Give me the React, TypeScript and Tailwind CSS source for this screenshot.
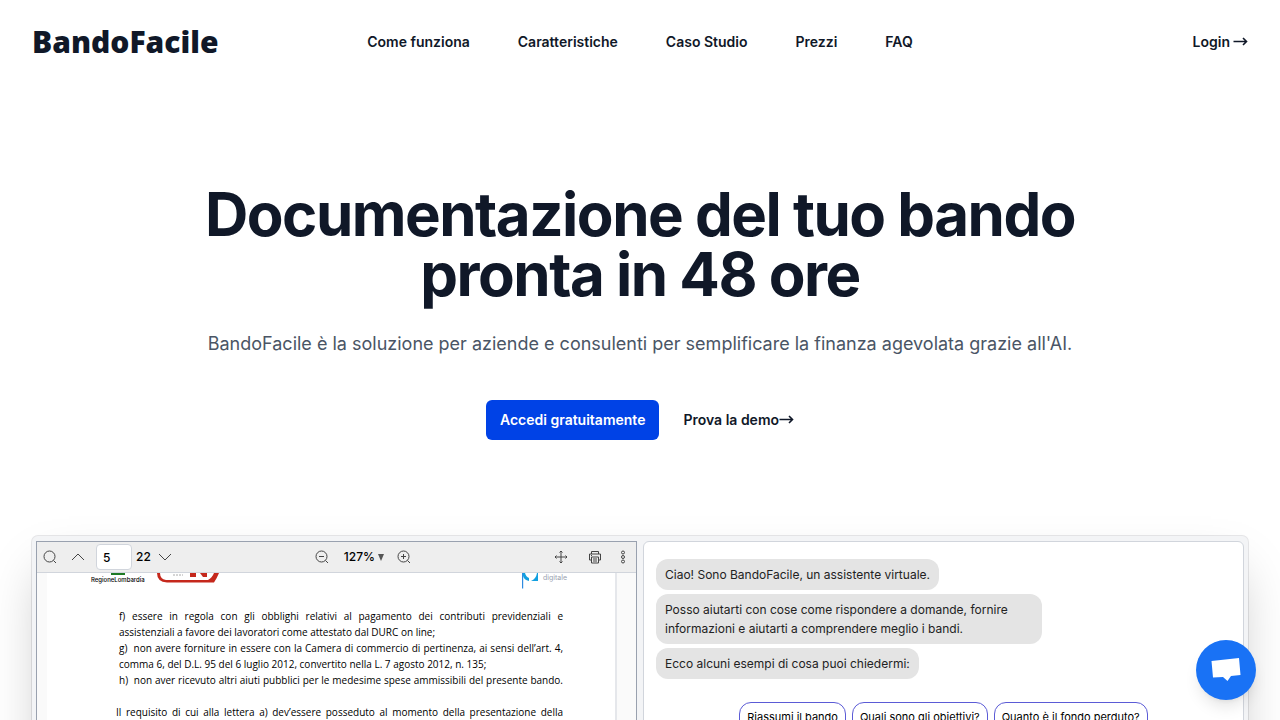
import type { ReactNode } from 'react';

const navigation = [
  { name: 'Come funziona', href: '#come-funziona' },
  { name: 'Caratteristiche', href: '#caratteristiche' },
  { name: 'Caso Studio', href: '#caso-studio' },
  { name: 'Prezzi', href: '#prezzi' },
  { name: 'FAQ', href: '#faq' },
];

const requirements = [
  { text: 'f) essere in regola con gli obblighi relativi al pagamento dei contributi previdenziali e', fill: true },
  { text: 'assistenziali a favore dei lavoratori come attestato dal DURC on line;', fill: false },
  { text: 'g)\u00a0 non avere forniture in essere con la Camera di commercio di pertinenza, ai sensi dell’art. 4,', fill: true },
  { text: 'comma 6, del D.L. 95 del 6 luglio 2012, convertito nella L. 7 agosto 2012, n. 135;', fill: false },
  { text: 'h)\u00a0 non aver ricevuto altri aiuti pubblici per le medesime spese ammissibili del presente bando.', fill: true },
];

const messages = [
  'Ciao! Sono BandoFacile, un assistente virtuale.',
  'Posso aiutarti con cose come rispondere a domande, fornire informazioni e aiutarti a comprendere meglio i bandi.',
  'Ecco alcuni esempi di cosa puoi chiedermi:',
];

const suggestions = [
  'Riassumi il bando',
  'Quali sono gli obiettivi?',
  'Quanto è il fondo perduto?',
];

function ToolIcon({ children }: { children: ReactNode }) {
  return (
    <svg
      viewBox="0 0 16 16"
      className="h-4 w-4"
      fill="none"
      stroke="#444"
      strokeWidth="1"
      aria-hidden="true"
    >
      {children}
    </svg>
  );
}

function Arrow() {
  return (
    <svg
      viewBox="0 0 15 10"
      className="h-2.5 w-[15px]"
      fill="none"
      stroke="currentColor"
      strokeWidth="1.6"
      aria-hidden="true"
    >
      <path d="M.5 4.500h13M10 1l3.500 3.500L10 8" />
    </svg>
  );
}

function Header() {
  return (
    <header>
      <nav className="flex items-center justify-between p-6 lg:px-8">
        <div className="flex lg:flex-1">
          <a
            href="#"
            className="font-['Open_Sans','Noto_Sans',sans-serif] text-3xl font-extrabold"
          >
            BandoFacile
          </a>
        </div>
        <div className="hidden gap-x-12 md:flex">
          {navigation.map((item) => (
            <a key={item.name} href={item.href} className="text-sm leading-6 font-semibold">
              {item.name}
            </a>
          ))}
        </div>
        <div className="flex lg:flex-1 lg:justify-end">
          <a href="#login" className="flex items-center gap-[3px] text-sm leading-6 font-semibold">
            Login
            <Arrow />
          </a>
        </div>
      </nav>
    </header>
  );
}

function Hero() {
  return (
    <div className="mx-auto max-w-4xl text-center">
      <h1 className="text-6xl leading-none font-bold tracking-tight">
        Documentazione del tuo bando pronta in 48 ore
      </h1>
      <p className="mt-6 text-lg leading-8 text-gray-600">
        BandoFacile è la soluzione per aziende e consulenti per semplificare la
        finanza agevolata grazie all'AI.
      </p>
      <div className="mt-10 flex items-center justify-center gap-x-6">
        <button className="rounded-md bg-[#0042e6] px-3.5 py-2.5 text-sm font-semibold text-white">
          Accedi gratuitamente
        </button>
        <a href="#demo" className="flex items-center text-sm leading-6 font-semibold">
          Prova la demo
          <Arrow />
        </a>
      </div>
    </div>
  );
}

function Toolbar() {
  return (
    <div className="flex h-[31px] items-center justify-between border-b border-gray-300 bg-[#eeeeee] px-[5px] text-xs font-medium text-black">
      <div className="flex items-center">
        <button aria-label="Cerca">
          <ToolIcon>
            <circle cx="7.5" cy="7.5" r="5.5" />
            <path d="M11.5 11.5 14 14" />
          </ToolIcon>
        </button>
        <button aria-label="Pagina precedente" className="ml-3">
          <ToolIcon>
            <path d="m2 11 6-6 6 6" />
          </ToolIcon>
        </button>
        <input
          aria-label="Pagina"
          defaultValue="5"
          className="ml-2.5 h-[26px] w-9 rounded-sm border border-gray-300 bg-white px-1.5"
        />
        <span className="ml-1">22</span>
        <button aria-label="Pagina successiva" className="ml-1.5">
          <ToolIcon>
            <path d="m2 5 6 6 6-6" />
          </ToolIcon>
        </button>
      </div>
      <div className="flex items-center">
        <button aria-label="Riduci">
          <ToolIcon>
            <circle cx="7.5" cy="7.5" r="5.5" />
            <path d="M11.5 11.5 14 14M5 7.5h5" />
          </ToolIcon>
        </button>
        <button className="ml-3.5 flex items-center gap-[3px]">
          127%
          <svg viewBox="0 0 6 7" className="h-[7px] w-1.5" aria-hidden="true">
            <path d="M0 0h6L3 7Z" fill="#555" />
          </svg>
        </button>
        <button aria-label="Ingrandisci" className="ml-3">
          <ToolIcon>
            <circle cx="7.5" cy="7.5" r="5.5" />
            <path d="M11.5 11.5 14 14M5 7.5h5M7.5 5v5" />
          </ToolIcon>
        </button>
      </div>
      <div className="flex items-center">
        <button aria-label="Sposta">
          <ToolIcon>
            <path d="M8 2v12M2 8h12M6.5 3.5 8 2l1.5 1.5M6.5 12.5 8 14l1.5-1.5M3.5 6.5 2 8l1.5 1.5M12.5 6.5 14 8l-1.5 1.5" />
          </ToolIcon>
        </button>
        <button aria-label="Stampa" className="ml-[18px]">
          <ToolIcon>
            <path d="M4.5 5V2.5h7V5M4.5 11h-2V5h11v6h-2M4.5 8h7v6h-7zM6 10h4M6 12h4M4 6.5h1" />
          </ToolIcon>
        </button>
        <button aria-label="Altro" className="ml-3">
          <ToolIcon>
            <circle cx="8" cy="3.5" r="1.5" />
            <circle cx="8" cy="8" r="1.5" />
            <circle cx="8" cy="12.5" r="1.5" />
          </ToolIcon>
        </button>
      </div>
    </div>
  );
}

function DocumentViewer() {
  return (
    <div className="border border-gray-400 bg-[#fafafa]">
      <Toolbar />
      <div className="mr-[19px] ml-2.5 border-r-2 border-gray-200 bg-white pr-[52px] pb-60 pl-[72px] text-black">
        <div className="-mr-1 -ml-7 flex h-[35px] items-start">
          <div className="flex flex-col items-center">
            <svg viewBox="0 0 14 3" className="h-[3px] w-3.5" aria-hidden="true">
              <path d="M0 0h14v2H0z" fill="#1f7a24" />
            </svg>
            <span className="text-[6px] leading-[7px] font-medium">RegioneLombardia</span>
          </div>
          <svg viewBox="0 0 62 10" className="ml-3 h-2.5 w-[62px]" aria-hidden="true">
            <path d="M0 0h3q0 6 6 7h42q4-2 6-7h5q-2 5-5 9.500H10Q0 9 0 0Z" fill="#c5281c" />
            <path d="M33 0h6v4h-6zM43 0h7v4h-4z" fill="#c5281c" />
            <path d="M16 2h10" stroke="#aaa" strokeDasharray="2 1" />
          </svg>
          <svg viewBox="0 0 18 16" className="ml-auto h-4 w-[18px]" aria-hidden="true">
            <path d="M0 0h1.200v15.500H0z" fill="#2f8be0" />
            <path d="M1 0h2q1 4 4 5v3Q2 7 1 3zM16 0v8H9q5-2 6-8z" fill="#12a0e0" />
          </svg>
          <span className="ml-[3px] text-[7px] leading-[9px] text-gray-400">digitale</span>
        </div>
        <div className="font-['Open_Sans',sans-serif] text-[10px] leading-4 font-medium whitespace-nowrap">
          {requirements.map((line) => (
            <p key={line.text} className={line.fill ? '[text-align-last:justify]' : ''}>
              {line.text}
            </p>
          ))}
          <p className="mt-4 -ml-[3px] [text-align-last:justify]">
            Il requisito di cui alla lettera a) dev’essere posseduto al momento della presentazione della
          </p>
        </div>
      </div>
    </div>
  );
}

function Chat() {
  return (
    <div className="rounded-md border border-gray-300 bg-white px-3 pt-[17px] text-[#222]">
      <div className="flex flex-col items-start gap-1">
        {messages.map((message) => (
          <p
            key={message}
            className="max-w-[386px] rounded-xl bg-[#e4e4e4] px-[9px] py-1.5 text-xs leading-[19px]"
          >
            {message}
          </p>
        ))}
      </div>
      <div className="mt-[23px] flex justify-center gap-1.5">
        {suggestions.map((suggestion) => (
          <button
            key={suggestion}
            className="rounded-xl border border-[#5b5bd6] px-[7px] py-1.5 text-[11px] leading-4 whitespace-nowrap text-black"
          >
            {suggestion}
          </button>
        ))}
      </div>
    </div>
  );
}

export default function App() {
  return (
    <div className="overflow-hidden bg-white font-[Inter,sans-serif] text-gray-900">
      <Header />
      <main className="px-6 pt-[100px] lg:px-8">
        <Hero />
        <div className="mt-24 mb-24 grid min-h-[600px] grid-cols-2 gap-1.5 rounded-md bg-gray-100 p-1 pt-[5px] shadow-2xl ring-1 ring-gray-900/10">
          <DocumentViewer />
          <Chat />
        </div>
      </main>
      <button
        aria-label="Apri la chat"
        className="fixed right-6 bottom-5 flex h-[60px] w-[60px] items-center justify-center rounded-full bg-[#1972f5] shadow-lg"
      >
        <svg viewBox="0 0 30 26" className="h-[26px] w-[30px]" aria-hidden="true">
          <path d="M.5 4 28 1l1.500 17-9.500 1-3.500 5-4.500-4-10 .5Z" fill="#fff" />
        </svg>
      </button>
    </div>
  );
}
